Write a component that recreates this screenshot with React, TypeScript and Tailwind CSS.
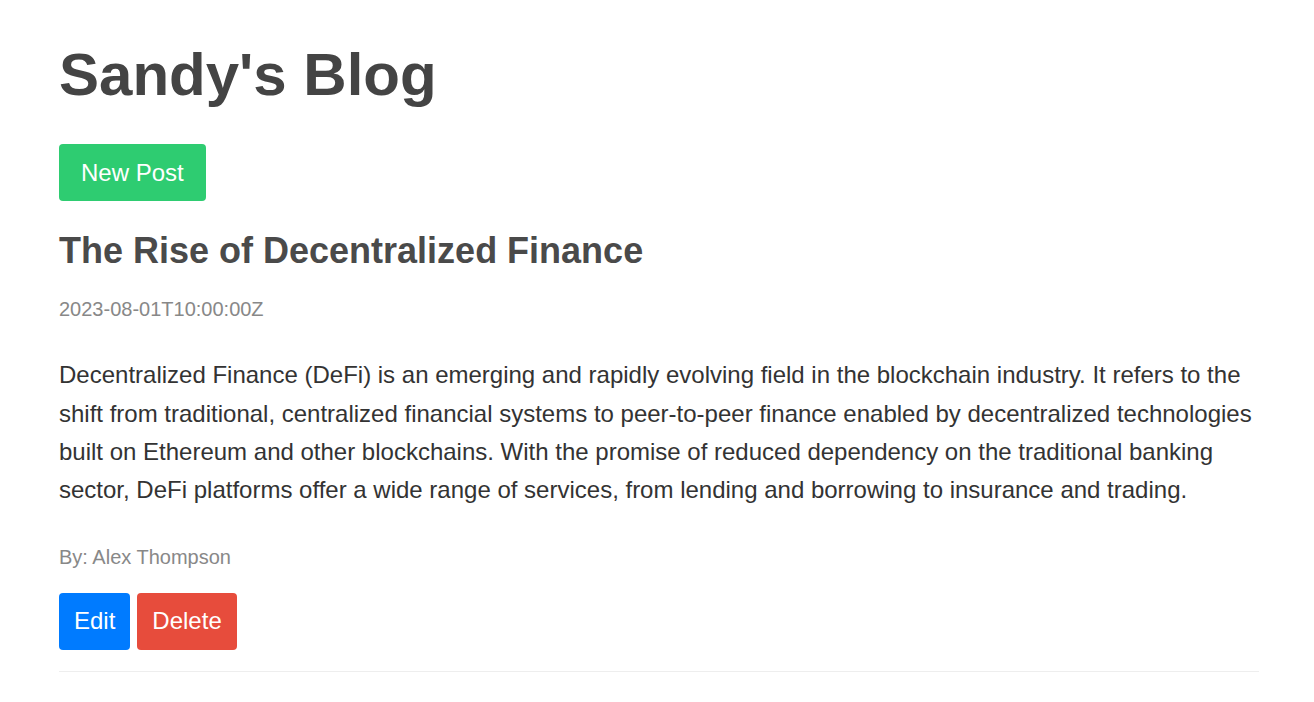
import React from 'react';

type Post = {
    id: number
    title: string
    createdAt: string
    content: string
    author: string
}

const posts: Post[] = [
    {
        id: 1,
        title: 'The Rise of Decentralized Finance',
        createdAt: '2023-08-01T10:00:00Z',
        content:
            'Decentralized Finance (DeFi) is an emerging and rapidly evolving field in the blockchain industry. It refers to the shift from traditional, centralized financial systems to peer-to-peer finance enabled by decentralized technologies built on Ethereum and other blockchains. With the promise of reduced dependency on the traditional banking sector, DeFi platforms offer a wide range of services, from lending and borrowing to insurance and trading.',
        author: 'Alex Thompson',
    },
];

export default function App() {
    return (
        <div className="min-h-screen bg-white font-['Liberation_Sans',Arial,sans-serif] pl-[59px] pt-[45px]">
            <div className="w-[1200px]">
                <h1 className="text-[60px] leading-[60px] font-bold text-[#444]">Sandy's Blog</h1>
                <button className="mt-[39px] h-[57px] px-[22px] rounded-[4px] bg-[#2ecc71] text-white text-[24px] leading-none">
                    New Post
                </button>
                {posts.map((post) => (
                    <div key={post.id} className="border-b border-[#eee] pb-[21px]">
                        <h2 className="mt-[28px] text-[36px] leading-[43.2px] font-bold text-[#4a4a4a]">{post.title}</h2>
                        <p className="mt-[25px] text-[20px] leading-[24px] text-[#888]">{post.createdAt}</p>
                        <p className="mt-[35px] text-[24px] leading-[38.4px] text-[#333]">{post.content}</p>
                        <p className="mt-[35px] text-[20px] leading-[24px] text-[#888]">By: {post.author}</p>
                        <div className="mt-[24px] flex gap-[7px]">
                            <button className="h-[57px] px-[15px] rounded-[4px] bg-[#007bff] text-white text-[24px] leading-none">Edit</button>
                            <button className="h-[57px] px-[15px] rounded-[4px] bg-[#e74c3c] text-white text-[24px] leading-none">Delete</button>
                        </div>
                    </div>
                ))}
            </div>
        </div>
    );
}
